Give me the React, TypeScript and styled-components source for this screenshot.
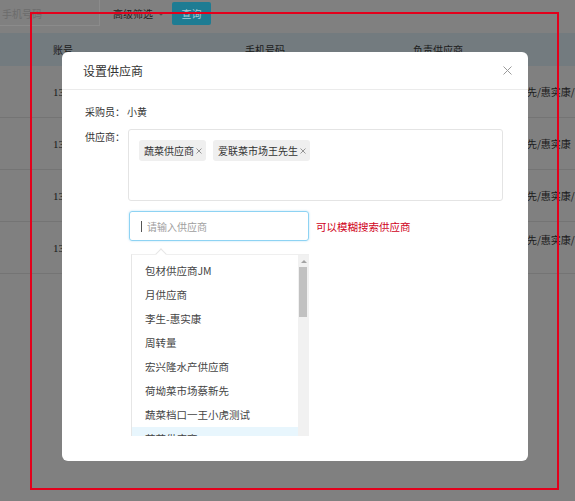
import React from 'react';
import styled, { createGlobalStyle } from 'styled-components';

const GlobalStyle = createGlobalStyle`
  html, body { margin: 0; padding: 0; }
  body {
    width: 575px;
    height: 501px;
    overflow: hidden;
    background: #808080;
    font-family: "Noto Sans CJK SC", "Noto Sans", sans-serif;
  }
  * { box-sizing: border-box; }
`;

const Page = styled.div`
  position: relative;
  width: 575px;
  height: 501px;
  overflow: hidden;
  background: #808080;
  color: #1c1c1c;
  font-size: 10px;
`;

/* ---------- dimmed page behind the modal ---------- */
const Toolbar = styled.div`
  display: flex;
  align-items: flex-start;
  height: 33px;
`;

const SearchBox = styled.div`
  width: 100px;
  height: 26px;
  line-height: 27px;
  padding-left: 2px;
  border-right: 1px solid #8b8b8b;
  border-bottom: 1px solid #8b8b8b;
  color: #6c6c6c;
  font-size: 10px;
`;

const Filter = styled.div`
  display: flex;
  align-items: center;
  gap: 5px;
  width: 59px;
  height: 27px;
  margin-left: 13px;
  color: #222;
  font-size: 10px;
`;

const QueryButton = styled.div`
  width: 39px;
  height: 23px;
  margin-top: 2px;
  border-radius: 2px;
  background: #1e7c93;
  color: #a7cfda;
  font-size: 10px;
  display: flex;
  align-items: center;
  justify-content: center;
`;

const TableHead = styled.div`
  display: grid;
  grid-template-columns: 192px 168px 1fr;
  align-items: center;
  height: 33px;
  padding-left: 53px;
  background: #737b7f;
  color: #1a1a1a;
  font-size: 10px;
`;

const TableRow = styled.div`
  display: grid;
  grid-template-columns: 192px 168px 1fr;
  align-items: center;
  height: 52px;
  padding-left: 53px;
  border-bottom: 1px solid #747474;
  color: #1a1a1a;
  font-size: 10px;
`;

const Cell = styled.div`
  white-space: nowrap;
  overflow: hidden;
`;

const NumberCell = styled(Cell)`
  font-family: "Liberation Serif", serif;
  font-size: 11px;
`;

const SupplierCell = styled(Cell)`
  line-height: 16px;
`;

/* ---------- modal ---------- */
const Modal = styled.div`
  position: absolute;
  left: 62px;
  top: 52px;
  width: 466px;
  height: 409px;
  background: #fff;
  border-radius: 6px;
  display: flex;
  flex-direction: column;
  color: #333;
`;

const ModalHeader = styled.div`
  height: 38px;
  flex-shrink: 0;
  display: flex;
  align-items: center;
  justify-content: space-between;
  padding: 0 16px 0 21px;
  border-bottom: 1px solid #ebebeb;
`;

const Title = styled.div`
  font-size: 12px;
  color: #333;
`;

const CloseIcon = styled.svg`
  width: 9px;
  height: 9px;
  display: block;
`;

const ModalBody = styled.div`
  padding: 14px 23px 0 23px;
  display: flex;
  flex-direction: column;
`;

const FieldRow = styled.div<{ $gap?: number }>`
  display: flex;
  align-items: flex-start;
  margin-top: ${(p) => p.$gap ?? 0}px;
`;

const Label = styled.div`
  width: 42px;
  flex-shrink: 0;
  line-height: 16px;
  font-size: 10px;
  color: #333;
`;

const Value = styled.div`
  line-height: 16px;
  font-size: 10px;
  color: #333;
`;

const TagBox = styled.div`
  width: 375px;
  height: 72px;
  margin-left: 1px;
  padding: 10px;
  border: 1px solid #e4e4e4;
  border-radius: 3px;
  display: flex;
  align-items: flex-start;
  gap: 7px;
`;

const Tag = styled.div`
  height: 21px;
  display: flex;
  align-items: center;
  gap: 2px;
  padding: 0 4px 0 5px;
  background: #efefef;
  border-radius: 3px;
  font-size: 10px;
  color: #333;
  white-space: nowrap;
`;

const TagClose = styled.svg`
  width: 6px;
  height: 6px;
  display: block;
`;

const SearchRow = styled.div`
  display: flex;
  align-items: center;
  margin: 10px 0 0 44px;
`;

const SearchInput = styled.div`
  width: 180px;
  height: 30px;
  display: flex;
  align-items: center;
  padding-left: 11px;
  border: 1px solid #8ed3f3;
  border-radius: 3px;
  box-shadow: 0 0 2px rgba(120, 200, 240, 0.6);
`;

const Caret = styled.span`
  width: 1px;
  height: 11px;
  background: #555;
  margin-right: 5px;
  flex-shrink: 0;
`;

const InputField = styled.input`
  flex: 1;
  min-width: 0;
  border: none;
  outline: none;
  padding: 0;
  background: transparent;
  font-family: inherit;
  font-size: 10px;
  color: #333;
  &::placeholder {
    color: #9e9e9e;
  }
`;

const Hint = styled.div`
  margin-left: 7px;
  font-size: 10.5px;
  color: #d0021b;
  white-space: nowrap;
`;

const Dropdown = styled.div`
  position: relative;
  width: 178px;
  height: 182px;
  margin: 13px 0 0 46px;
  display: flex;
  background: #fff;
  border-left: 1px solid #e6e6e6;
  border-top: 1px solid #efefef;
`;

const DropArrow = styled.span`
  position: absolute;
  left: 25px;
  top: -5px;
  width: 8px;
  height: 8px;
  background: #fff;
  border-left: 1px solid #e6e6e6;
  border-top: 1px solid #e6e6e6;
  transform: rotate(45deg);
`;

const OptionList = styled.div`
  flex: 1;
  overflow: hidden;
  padding-top: 4px;
`;

const Option = styled.div<{ $active?: boolean }>`
  height: 24px;
  line-height: 24px;
  padding-left: 13px;
  font-size: 10.5px;
  color: #444;
  white-space: nowrap;
  background: ${(p) => (p.$active ? '#e8f6fd' : 'transparent')};
`;

const ScrollTrack = styled.div`
  width: 11px;
  flex-shrink: 0;
  background: #f1f1f1;
  display: flex;
  flex-direction: column;
  align-items: flex-start;
`;

const ScrollUp = styled.div`
  width: 11px;
  height: 12px;
  display: flex;
  align-items: center;
  justify-content: center;
`;

const UpTriangle = styled.span`
  width: 0;
  height: 0;
  border-left: 3px solid transparent;
  border-right: 3px solid transparent;
  border-bottom: 3px solid #a3a3a3;
`;

const ScrollThumb = styled.div`
  width: 8px;
  height: 50px;
  margin-left: 1px;
  background: #c1c1c1;
`;

const RedFrame = styled.div`
  position: absolute;
  left: 30px;
  top: 12px;
  width: 529px;
  height: 478px;
  border: 2px solid #e3001b;
  pointer-events: none;
`;

const Chevron = () => (
  <svg width="6" height="4" viewBox="0 0 6 4" fill="none">
    <path d="M0.5 0.8 L3 3.2 L5.5 0.8" stroke="#333" strokeWidth="0.8" />
  </svg>
);

const SmallX = () => (
  <TagClose viewBox="0 0 6 6" fill="none">
    <path d="M0.5 0.5 L5.5 5.5 M5.5 0.5 L0.5 5.5" stroke="#8a8a8a" strokeWidth="0.9" />
  </TagClose>
);

const rows = [
  { phone: '13800138001', mobile: '13800138001', suppliers: ['月供应商/荷坳菜市场蔡新先/惠实康/李生-惠实康'] },
  { phone: '13800138002', mobile: '13800138002', suppliers: ['月供应商/荷坳菜市场蔡新先/惠实康'] },
  { phone: '13800138003', mobile: '13800138003', suppliers: ['月供应商/荷坳菜市场蔡新先/惠实康/李生-惠实康'] },
  { phone: '13800138004', mobile: '13800138004', suppliers: ['月供应商/荷坳菜市场蔡新先/惠实康/李生-惠实康', '周转量'] },
];

const selected = ['蔬菜供应商', '爱联菜市场王先生'];

const options = [
  '包材供应商JM',
  '月供应商',
  '李生-惠实康',
  '周转量',
  '宏兴隆水产供应商',
  '荷坳菜市场蔡新先',
  '蔬菜档口一王小虎测试',
  '蔬菜供应商',
  '爱联菜市场王先生',
];

export default function App() {
  return (
    <Page>
      <GlobalStyle />
      <Toolbar>
        <SearchBox>手机号码</SearchBox>
        <Filter>
          高级筛选
          <Chevron />
        </Filter>
        <QueryButton>查询</QueryButton>
      </Toolbar>
      <TableHead>
        <Cell>账号</Cell>
        <Cell>手机号码</Cell>
        <SupplierCell>负责供应商</SupplierCell>
      </TableHead>
      {rows.map((r) => (
        <TableRow key={r.phone}>
          <NumberCell>{r.phone}</NumberCell>
          <NumberCell>{r.mobile}</NumberCell>
          <SupplierCell>
            {r.suppliers.map((line) => (
              <div key={line}>{line}</div>
            ))}
          </SupplierCell>
        </TableRow>
      ))}

      <Modal>
        <ModalHeader>
          <Title>设置供应商</Title>
          <CloseIcon viewBox="0 0 9 9" fill="none">
            <path d="M0.5 0.5 L8.5 8.5 M8.5 0.5 L0.5 8.5" stroke="#9a9a9a" strokeWidth="1" />
          </CloseIcon>
        </ModalHeader>
        <ModalBody>
          <FieldRow>
            <Label>采购员：</Label>
            <Value>小黄</Value>
          </FieldRow>
          <FieldRow $gap={9}>
            <Label>供应商：</Label>
            <TagBox>
              {selected.map((s) => (
                <Tag key={s}>
                  {s}
                  <SmallX />
                </Tag>
              ))}
            </TagBox>
          </FieldRow>
          <SearchRow>
            <SearchInput>
              <Caret />
              <InputField placeholder="请输入供应商" />
            </SearchInput>
            <Hint>可以模糊搜索供应商</Hint>
          </SearchRow>
          <Dropdown>
            <DropArrow />
            <OptionList>
              {options.map((o, i) => (
                <Option key={o} $active={i === 7}>
                  {o}
                </Option>
              ))}
            </OptionList>
            <ScrollTrack>
              <ScrollUp>
                <UpTriangle />
              </ScrollUp>
              <ScrollThumb />
            </ScrollTrack>
          </Dropdown>
        </ModalBody>
      </Modal>
      <RedFrame />
    </Page>
  );
}
